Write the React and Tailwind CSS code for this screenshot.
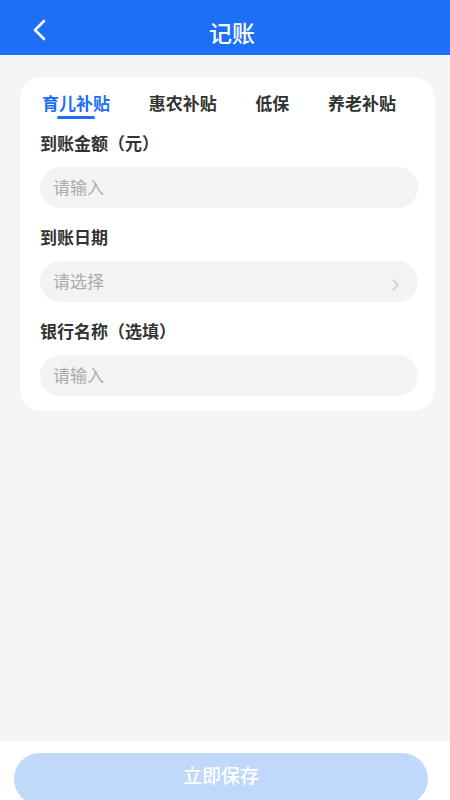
import React from "react";

const font = { fontFamily: '"Noto Sans CJK SC", "Noto Sans", sans-serif' };

function Field({ label, placeholder, chevron }) {
  return (
    <div className="flex flex-col">
      <div className="text-[17px] font-bold text-[#333333] leading-[24px]">{label}</div>
      <div className="mt-[12px] h-[41px] rounded-full bg-[#f3f3f3] flex items-center justify-between pl-[13px] pr-[18px]">
        <span className="text-[17px] text-[#ababab] -mt-[2px]">{placeholder}</span>
        {chevron && (
          <svg width="9" height="14" viewBox="0 0 9 14" fill="none" className="mt-[6px]">
            <path d="M2 2l5 5-5 5" stroke="#c8c8c8" strokeWidth="1.4" strokeLinecap="round" strokeLinejoin="round" />
          </svg>
        )}
      </div>
    </div>
  );
}

export default function App() {
  return (
    <div className="w-[450px] h-[800px] bg-[#f5f5f5] flex flex-col overflow-hidden" style={font}>
      <div className="h-[55px] bg-[#1d6ff7] flex items-center relative shrink-0 pt-[5px]">
        <div className="pl-[32px] flex items-center">
          <svg width="16" height="22" viewBox="0 0 16 22" fill="none">
            <path d="M12 2L3 11l9 9" stroke="#ffffff" strokeWidth="2.6" strokeLinecap="round" strokeLinejoin="round" />
          </svg>
        </div>
        <div className="absolute left-0 right-0 top-[15px] text-center text-white text-[23px] font-medium leading-[34px] pl-[14px] pointer-events-none">记账</div>
      </div>

      <div className="pl-[20px] pr-[15px] pt-[22px] flex-1">
        <div className="bg-white rounded-[22px] pl-[20px] pr-[17px] pt-[14px] pb-[15px]">
          <div className="flex items-start justify-between pl-[2px] pr-[22px]">
            <div className="flex flex-col items-center">
              <span className="text-[17px] font-bold text-[#1d6ff7] leading-[24px]">育儿补贴</span>
              <span className="mt-[1px] w-[38px] h-[3px] rounded-full bg-[#1d6ff7]" />
            </div>
            <span className="text-[17px] font-bold text-[#333333] leading-[24px]">惠农补贴</span>
            <span className="text-[17px] font-bold text-[#333333] leading-[24px]">低保</span>
            <span className="text-[17px] font-bold text-[#333333] leading-[24px]">养老补贴</span>
          </div>
          <div className="mt-[12px] flex flex-col gap-[17px]">
            <Field label="到账金额（元）" placeholder="请输入" />
            <Field label="到账日期" placeholder="请选择" chevron />
            <Field label="银行名称（选填）" placeholder="请输入" />
          </div>
        </div>
      </div>

      <div className="h-[58px] bg-white shrink-0 pl-[14px] pr-[22px] pt-[11px]">
        <div className="h-[52px] rounded-full bg-[#c0d8f9] flex items-center justify-center">
          <span className="text-white text-[19px] font-medium -mt-[8px]">立即保存</span>
        </div>
      </div>
    </div>
  );
}
